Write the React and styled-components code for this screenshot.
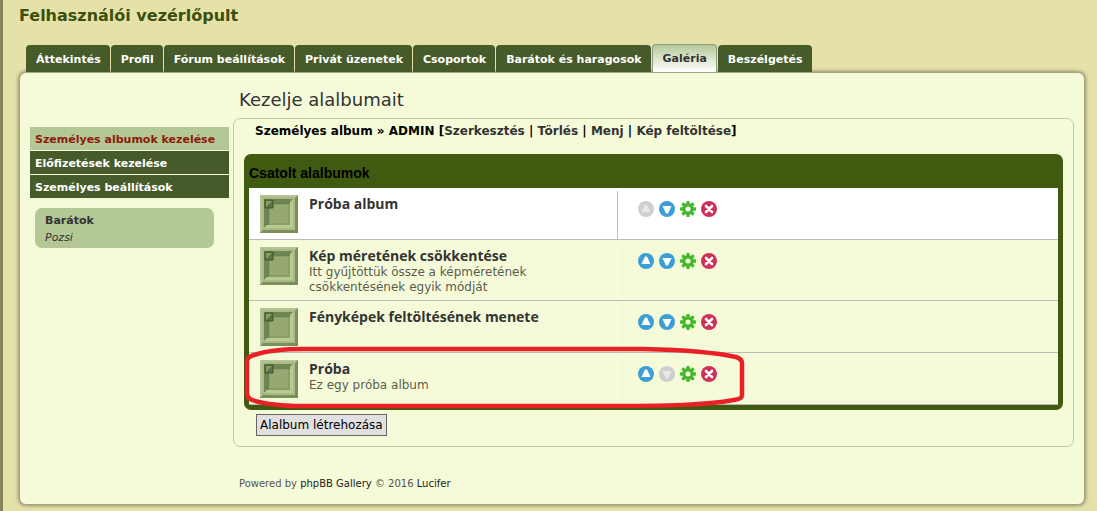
import React from 'react';
import styled, { createGlobalStyle, css } from 'styled-components';

const tabs = [
  'Áttekintés',
  'Profil',
  'Fórum beállítások',
  'Privát üzenetek',
  'Csoportok',
  'Barátok és haragosok',
  'Galéria',
  'Beszélgetés',
];

const menu = ['Személyes albumok kezelése', 'Előfizetések kezelése', 'Személyes beállítások'];

const albums = [
  { name: 'Próba album', first: true },
  {
    name: 'Kép méretének csökkentése',
    description: 'Itt gyűjtöttük össze a képméretének csökkentésének egyik módját',
  },
  { name: 'Fényképek feltöltésének menete' },
  { name: 'Próba', description: 'Ez egy próba album', last: true, marked: true },
];

const AlbumIcon = () => (
  <svg width="38" height="38" viewBox="0 0 38 38" aria-hidden="true">
    <path d="M0 0H38V38H0Z" fill="#a9ba84" />
    <path d="M0 38V0H38L36 2H2V36Z" fill="#b5c494" />
    <path d="M38 0V38H0L3 35H35V3Z" fill="#7b8f5b" />
    <path d="M4 4H33L30 8H8V30L4 33Z" fill="#6f8553" />
    <path d="M33 4V33H4L7 30H30V7Z" fill="#b9ca92" />
    <path d="M7 7H30V30H7Z" fill="#7d925c" />
    <path d="M9 30V9H30V30Z" fill="#8a9d66" />
    <path d="M10 10H27V27H10Z" fill="#96a871" />
    <path d="M10 27H27V10" fill="none" stroke="#a0b17a" />
    <path d="M8 30V8H30" fill="none" stroke="#5f7548" />
    <path d="M5 5H13V13H5Z" fill="#5d7345" stroke="#3f5430" />
    <path d="M6 12L12 6H6Z" fill="#8a9e68" />
  </svg>
);

const Arrow = ({ down, disabled }) => (
  <svg width="16" height="16" viewBox="0 0 16 16" aria-hidden="true">
    <circle cx="8" cy="8" r="8" fill={disabled ? '#cfcfcf' : '#3b9fd6'} />
    <path
      d={down ? 'M3.5 5H12.5L9 12.5H7Z' : 'M3.5 11H12.5L9 3.5H7Z'}
      fill={disabled ? '#e8e8e8' : '#fff'}
    />
  </svg>
);

const teeth = [0, 45, 90, 135, 180, 225, 270, 315];

const Gear = () => (
  <svg width="16" height="16" viewBox="0 0 16 16" aria-hidden="true">
    {teeth.map((angle) => (
      <path key={angle} d="M6 4L6.6 0H9.4L10 4Z" fill="#45b82e" transform={`rotate(${angle} 8 8)`} />
    ))}
    <circle cx="8" cy="8" r="4.1" fill="none" stroke="#45b82e" strokeWidth="3.2" />
  </svg>
);

const Cross = () => (
  <svg width="16" height="16" viewBox="0 0 16 16" aria-hidden="true">
    <circle cx="8" cy="8" r="8" fill="#cf3059" />
    <path d="M5 5L11 11M11 5L5 11" stroke="#fff" strokeWidth="2.6" strokeLinecap="round" />
  </svg>
);

const Marker = () => (
  <MarkerSvg viewBox="0 0 500 64" aria-hidden="true">
    <path
      d="M60 4H400C440 5 474 8 492 12Q498 14 498 18V50Q498 54 490 55C462 60 430 61 350 61H50C30 60 14 58 6 54Q3 52 3 48V16Q3 12 10 10C22 6 40 4 60 4Z"
      fill="none"
      stroke="#e92026"
      strokeWidth="4.5"
    />
  </MarkerSvg>
);

const App = () => (
  <>
    <GlobalStyle />
    <Page>
      <Title>Felhasználói vezérlőpult</Title>
      <Tabs>
        {tabs.map((tab) => (
          <Tab key={tab} href="#" $active={tab === 'Galéria'}>
            {tab}
          </Tab>
        ))}
      </Tabs>
      <Panel>
        <Sidebar>
          <Menu>
            {menu.map((item, i) => (
              <MenuLink key={item} href="#" $active={i === 0}>
                {item}
              </MenuLink>
            ))}
          </Menu>
          <Friends>
            <strong>Barátok</strong>
            <em>Pozsi</em>
          </Friends>
        </Sidebar>
        <Main>
          <Heading>Kezelje alalbumait</Heading>
          <Box>
            <Path>
              Személyes album » ADMIN [<a href="#">Szerkesztés</a> | <a href="#">Törlés</a> |{' '}
              <a href="#">Menj</a> | <a href="#">Kép feltöltése</a>]
            </Path>
            <Forum>
              <ForumTitle>Csatolt alalbumok</ForumTitle>
              {albums.map((album) => (
                <Row key={album.name} $first={album.first}>
                  <Info>
                    <AlbumIcon />
                    <div>
                      <AlbumLink href="#">{album.name}</AlbumLink>
                      {album.description && <Description>{album.description}</Description>}
                    </div>
                  </Info>
                  <Actions $first={album.first}>
                    <Action type="button" aria-label="Fel" disabled={album.first}>
                      <Arrow disabled={album.first} />
                    </Action>
                    <Action type="button" aria-label="Le" disabled={album.last}>
                      <Arrow down disabled={album.last} />
                    </Action>
                    <Action type="button" aria-label="Szerkesztés">
                      <Gear />
                    </Action>
                    <Action type="button" aria-label="Törlés">
                      <Cross />
                    </Action>
                  </Actions>
                  {album.marked && <Marker />}
                </Row>
              ))}
            </Forum>
            <CreateButton type="button">Alalbum létrehozása</CreateButton>
          </Box>
          <Footer>
            Powered by <a href="#">phpBB Gallery</a> © 2016 <a href="#">Lucifer</a>
          </Footer>
        </Main>
      </Panel>
    </Page>
  </>
);
export default App;

const GlobalStyle = createGlobalStyle`
  * {
    box-sizing: border-box;
  }
  body {
    margin: 0;
    background: #e5e2a9;
    font-family: Verdana, 'DejaVu Sans', sans-serif;
    font-size: 11px;
    color: #333;
  }
  a {
    color: inherit;
    text-decoration: none;
  }
`;

const Page = styled.div`
  min-height: 100vh;
  padding: 5px 12px 6px 16px;
  border-left: 3px solid #85835a;
`;
const Title = styled.h1`
  margin: 0 0 17px;
  font-size: 16px;
  line-height: 22px;
  color: #3c4f0c;
`;
const Tabs = styled.nav`
  display: flex;
  align-items: flex-end;
  gap: 1px;
  padding-left: 7px;
`;
const Tab = styled.a`
  height: 27px;
  padding: 0 9px 0 10px;
  border-radius: 4px 4px 0 0;
  background: #465a2a;
  color: #fff;
  font-weight: bold;
  line-height: 29px;
  white-space: nowrap;
  ${({ $active }) =>
    $active &&
    css`
      height: 28px;
      border: 1px solid #8f9a80;
      border-bottom: 0;
      background: linear-gradient(#b6c99a, #fff);
      color: #333;
      line-height: 27px;
    `}
`;
const Panel = styled.div`
  display: flex;
  padding: 0 10px;
  border: 1px solid #a5a583;
  border-radius: 7px;
  background: #f5fbd9;
  box-shadow: 0 0 4px #66664a;
`;
const Sidebar = styled.aside`
  flex: 0 0 199px;
  margin-top: 54px;
`;
const Menu = styled.nav`
  display: flex;
  flex-direction: column;
  gap: 1px;
`;
const MenuLink = styled.a`
  padding: 2px 5px 0;
  background: ${({ $active }) => ($active ? '#b4c896' : '#465a2a')};
  color: ${({ $active }) => ($active ? '#8f1a0c' : '#fff')};
  font-weight: bold;
  line-height: 21px;
  white-space: nowrap;
`;
const Friends = styled.div`
  display: flex;
  flex-direction: column;
  margin: 10px 15px 0 5px;
  padding: 4px 10px 2px;
  border-radius: 7px;
  background: #b4c896;
  line-height: 17px;
`;
const Main = styled.main`
  flex: 1;
  min-width: 0;
  margin-left: 4px;
`;
const Heading = styled.h2`
  margin: 15px 0 6px 6px;
  font-size: 18px;
  font-weight: normal;
  line-height: 24px;
`;
const Box = styled.section`
  padding: 0 10px;
  border: 1px solid #c3c9b2;
  border-radius: 7px;
`;
const Path = styled.p`
  margin: 0 0 10px;
  padding: 0 11px;
  color: #000;
  font-size: 12px;
  font-weight: bold;
  line-height: 25px;
  a {
    color: #333;
  }
`;
const Forum = styled.div`
  padding: 0 5px 5px;
  border-radius: 7px;
  background: #405a10;
`;
const ForumTitle = styled.h3`
  margin: 0;
  padding: 10px 0 5px;
  color: #000;
  font-family: Arial, 'Liberation Sans', sans-serif;
  font-size: 14px;
  line-height: 19px;
`;
const Row = styled.div`
  position: relative;
  display: flex;
  min-height: 52px;
  padding-top: 3px;
  border-bottom: 1px solid #bbb;
  background: ${({ $first }) => ($first ? '#fff' : '#f5fbd9')};
`;
const Info = styled.div`
  display: flex;
  gap: 11px;
  width: 45.5%;
  padding: 4px 60px 5px 11px;
  svg {
    flex: none;
  }
`;
const AlbumLink = styled.a`
  display: block;
  font-family: 'Open Sans', sans-serif;
  font-size: 14px;
  font-weight: bold;
  line-height: 18px;
  white-space: nowrap;
`;
const Description = styled.div`
  color: #5c5c50;
  font-size: 12px;
  line-height: 15px;
`;
const Actions = styled.div`
  display: flex;
  gap: 5px;
  padding: 10px 20px;
  border-left: 1px solid ${({ $first }) => ($first ? '#c0c0c0' : '#fbfdf0')};
`;
const Action = styled.button`
  width: 16px;
  height: 16px;
  padding: 0;
  border: 0;
  background: none;
  svg {
    display: block;
  }
`;
const MarkerSvg = styled.svg`
  position: absolute;
  top: -8px;
  left: -5px;
  width: 500px;
  height: 64px;
  overflow: visible;
  pointer-events: none;
`;
const CreateButton = styled.button`
  display: block;
  height: 22px;
  margin: 4px 12px 10px;
  padding: 0 3px;
  border: 1px solid #666;
  background: #e2dfe0;
  color: #000;
  font: 12px Verdana, 'DejaVu Sans', sans-serif;
`;
const Footer = styled.footer`
  padding: 29px 6px 12px;
  font-size: 10px;
  line-height: 16px;
  color: #555;
  a {
    color: #222;
  }
`;
